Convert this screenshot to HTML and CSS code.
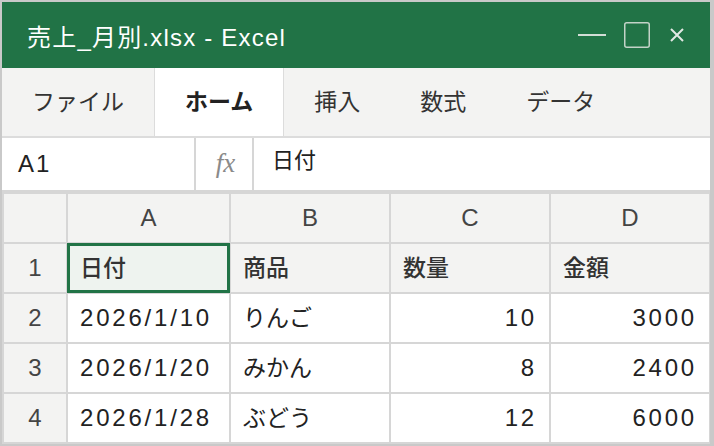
FILE: index.html
```html
<!DOCTYPE html>
<html lang="ja">
<head>
<meta charset="utf-8">
<title>売上_月別.xlsx - Excel</title>
<link rel="stylesheet" href="styles.css">
</head>
<body>
<div class="window">
  <div class="titlebar">
    <div class="title">売上_月別.xlsx - Excel</div>
    <div class="controls">
      <svg class="ctl-min" width="28" height="4" viewBox="0 0 28 4"><line x1="0" y1="2" x2="28" y2="2" stroke="#d3ddd6" stroke-width="2"/></svg>
      <svg class="ctl-max" width="26" height="26" viewBox="0 0 26 26"><rect x="0.75" y="0.75" width="24.5" height="24.5" rx="2" fill="none" stroke="#c3d3c8" stroke-width="1.5"/></svg>
      <svg class="ctl-close" width="14" height="14" viewBox="0 0 14 14"><path d="M1 1 L13 13 M13 1 L1 13" stroke="#e2e8e4" stroke-width="2" fill="none"/></svg>
    </div>
  </div>
  <div class="tabs">
    <div class="tab">ファイル</div>
    <div class="tab active">ホーム</div>
    <div class="tab">挿入</div>
    <div class="tab">数式</div>
    <div class="tab">データ</div>
  </div>
  <div class="formula">
    <div class="namebox">A1</div>
    <div class="fx">fx</div>
    <div class="fcontent">日付</div>
  </div>
  <div class="grid">
    <div class="hd corner"></div>
    <div class="hd">A</div>
    <div class="hd">B</div>
    <div class="hd">C</div>
    <div class="hd">D</div>

    <div class="hd">1</div>
    <div class="cell head selected">日付</div>
    <div class="cell head">商品</div>
    <div class="cell head">数量</div>
    <div class="cell head">金額</div>

    <div class="hd">2</div>
    <div class="cell lat">2026/1/10</div>
    <div class="cell">りんご</div>
    <div class="cell lat num">10</div>
    <div class="cell lat num">3000</div>

    <div class="hd">3</div>
    <div class="cell lat">2026/1/20</div>
    <div class="cell">みかん</div>
    <div class="cell lat num">8</div>
    <div class="cell lat num">2400</div>

    <div class="hd">4</div>
    <div class="cell lat">2026/1/28</div>
    <div class="cell">ぶどう</div>
    <div class="cell lat num">12</div>
    <div class="cell lat num">6000</div>
  </div>
</div>
</body>
</html>
```
FILE: styles.css
```css
* { box-sizing: border-box; }
html, body { margin: 0; padding: 0; }
body {
  background: #c9c9c9;
  width: 714px;
  height: 446px;
  overflow: hidden;
  font-family: "Liberation Sans", "Noto Sans CJK JP", sans-serif;
  color: #222;
}
.window {
  margin: 2px 0 0 2px;
  width: 708px;
  background: #fff;
  display: flex;
  flex-direction: column;
}
.titlebar {
  height: 66px;
  background: #217346;
  display: flex;
  align-items: center;
  justify-content: space-between;
  padding: 0 26px 0 25px;
}
.title {
  color: #fff;
  font-size: 24px;
  letter-spacing: 1.2px;
}
.controls {
  display: flex;
  align-items: center;
  gap: 18px;
}
.controls svg { display: block; }
.ctl-close { margin-left: 2px; }
.tabs {
  height: 70px;
  background: #f3f3f2;
  border-bottom: 2px solid #dcdcdc;
  display: flex;
}
.tab {
  padding: 0 30px 4px;
  display: flex;
  align-items: center;
  font-size: 23px;
  color: #333;
}
.tab.active {
  background: #fff;
  font-weight: bold;
  color: #222;
  border-left: 1.5px solid #dcdcdc;
  border-right: 1.5px solid #dcdcdc;
}
.formula {
  height: 54px;
  border-bottom: 2px solid #d6d6d6;
  display: flex;
  background: #fff;
}
.namebox {
  width: 194px;
  border-right: 2px solid #d6d6d6;
  display: flex;
  align-items: center;
  padding-left: 16px;
  font-size: 24px;
  letter-spacing: 2px;
}
.fx {
  width: 58px;
  border-right: 2px solid #d6d6d6;
  display: flex;
  align-items: center;
  justify-content: center;
  padding: 0 0 2px 3px;
  font-family: "Liberation Serif", serif;
  font-style: italic;
  font-size: 27px;
  color: #8a8a8a;
}
.fcontent {
  flex: 1;
  display: flex;
  align-items: center;
  padding: 0 0 12px 18px;
  font-size: 22px;
}
.grid {
  display: grid;
  grid-template-columns: 62px 161px 158px 158px 158px;
  grid-template-rows: repeat(5, 48px);
  gap: 2px;
  padding: 2px 0 2px 2px;
  background: #d6d6d6;
}
.hd {
  background: #f3f3f2;
  color: #444;
  font-size: 24px;
  display: flex;
  align-items: center;
  justify-content: center;
}
.cell {
  background: #fff;
  font-size: 23px;
  display: flex;
  align-items: center;
  padding: 0 12px 5px;
  color: #222;
}
.cell.lat {
  font-size: 24px;
  letter-spacing: 2.8px;
  padding-bottom: 0;
}
.cell.head {
  background: #f3f3f2;
  font-weight: 500;
  color: #333;
}
.cell.selected {
  background: #eef3ef;
  outline: 3px solid #217346;
  outline-offset: -2px;
}
.cell.num {
  justify-content: flex-end;
  padding-right: 12px;
}
```
